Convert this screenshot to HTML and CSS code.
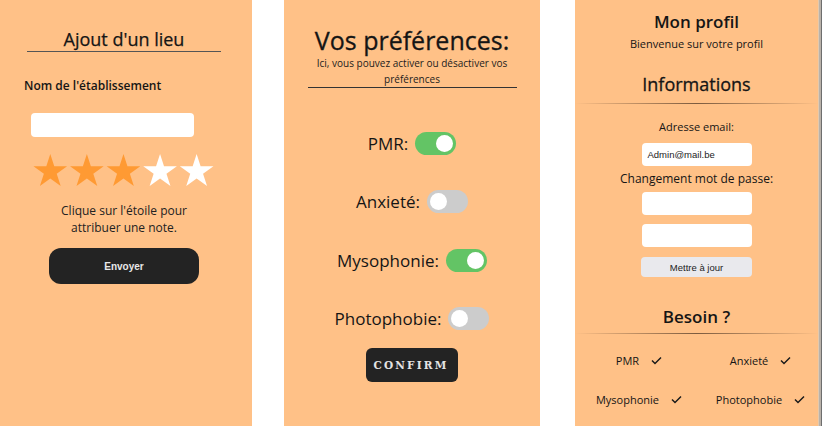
FILE: index.html
```html
<!DOCTYPE html>
<html lang="fr">
<head>
<meta charset="utf-8">
<title>Screens</title>
<link rel="stylesheet" href="styles.css">
</head>
<body>
<div class="screen">
  <section class="panel p1">
    <h1 class="p1-title">Ajout d'un lieu</h1>
    <div class="p1-label">Nom de l'établissement</div>
    <div class="field p1-input"></div>
    <svg class="stars" width="183" height="32" viewBox="0 0 196.7 34.4" aria-hidden="true">
      <defs>
        <polygon id="star" points="0,-19 4.27,-5.87 18.07,-5.87 6.9,2.24 11.17,15.37 0,7.26 -11.17,15.37 -6.9,2.24 -18.07,-5.87 -4.27,-5.87"/>
      </defs>
      <use href="#star" x="19.65" y="19" fill="#ff9a33"/>
      <use href="#star" x="58.98" y="19" fill="#ff9a33"/>
      <use href="#star" x="98.31" y="19" fill="#ff9a33"/>
      <use href="#star" x="137.64" y="19" fill="#ffffff"/>
      <use href="#star" x="176.97" y="19" fill="#ffffff"/>
    </svg>
    <p class="p1-hint">Clique sur l'étoile pour<br>attribuer une note.</p>
    <button class="send">Envoyer</button>
  </section>

  <section class="panel p2">
    <h1 class="p2-title">Vos préférences:</h1>
    <p class="p2-sub">Ici, vous pouvez activer ou désactiver vos<br>préférences</p>
    <div class="pref first"><span>PMR:</span><span class="toggle on"></span></div>
    <div class="pref"><span>Anxieté:</span><span class="toggle"></span></div>
    <div class="pref"><span>Mysophonie:</span><span class="toggle on"></span></div>
    <div class="pref"><span>Photophobie:</span><span class="toggle"></span></div>
    <button class="confirm">CONFIRM</button>
  </section>

  <section class="panel p3">
    <h1 class="p3-title">Mon profil</h1>
    <p class="p3-welcome">Bienvenue sur votre profil</p>
    <h2 class="p3-h2">Informations</h2>
    <div class="fade-line"></div>
    <div class="p3-label">Adresse email:</div>
    <div class="field p3-input email">Admin@mail.be</div>
    <div class="p3-label2">Changement mot de passe:</div>
    <div class="field p3-input pw1"></div>
    <div class="field p3-input pw2"></div>
    <button class="update">Mettre à jour</button>
    <h2 class="p3-h2 besoin">Besoin ?</h2>
    <div class="fade-line line2"></div>
    <div class="needs">
      <div class="need"><span>PMR</span><svg width="11" height="9" viewBox="0 0 11 9"><polyline points="1,4.5 4,7.5 10,1.5" fill="none" stroke="#1a1a1a" stroke-width="1.5"/></svg></div>
      <div class="need"><span>Anxieté</span><svg width="11" height="9" viewBox="0 0 11 9"><polyline points="1,4.5 4,7.5 10,1.5" fill="none" stroke="#1a1a1a" stroke-width="1.5"/></svg></div>
      <div class="need"><span>Mysophonie</span><svg width="11" height="9" viewBox="0 0 11 9"><polyline points="1,4.5 4,7.5 10,1.5" fill="none" stroke="#1a1a1a" stroke-width="1.5"/></svg></div>
      <div class="need"><span>Photophobie</span><svg width="11" height="9" viewBox="0 0 11 9"><polyline points="1,4.5 4,7.5 10,1.5" fill="none" stroke="#1a1a1a" stroke-width="1.5"/></svg></div>
    </div>
  </section>
  <div class="edge"></div>
</div>
</body>
</html>
```
FILE: styles.css
```css
* { box-sizing: border-box; }
html, body { margin: 0; padding: 0; background: #ffffff; }
body { font-family: "Open Sans", "DejaVu Sans", sans-serif; color: #151515; }

.screen { display: flex; height: 426px; overflow: hidden; }
.panel {
  background: #ffc187;
  height: 426px;
  display: flex;
  flex-direction: column;
  align-items: center;
}
.p1 { width: 252px; }
.p2 { width: 256px; margin-left: 32px; }
.p3 { width: 243px; margin-left: 35px; }
.edge {
  width: 4px;
  height: 426px;
  background: linear-gradient(to right, #e2c9ae 0, #e2c9ae 1px, #b9b2aa 1px, #b9b2aa 3px, #6e6e6e 3px);
}

.field { background: #ffffff; border-radius: 4px; }

/* Panel 1 */
.p1-title {
  align-self: flex-start;
  margin: 27px 0 0 27px;
  width: 194px;
  font-size: 18px;
  font-weight: 500;
  line-height: 24px;
  text-align: center;
  border-bottom: 1px solid #555;
  -webkit-text-stroke: 0.25px #151515;
}
.p1-label {
  align-self: flex-start;
  margin: 26px 0 0 24px;
  font-size: 12px;
  line-height: 16px;
  font-weight: 600;
}
.p1-input { align-self: flex-start; margin: 19px 0 0 31px; width: 163px; height: 24px; }
.stars { align-self: flex-start; margin: 17px 0 0 32px; display: block; }
.p1-hint {
  align-self: flex-start;
  width: 248px;
  margin: 17px 0 0;
  font-size: 12px;
  line-height: 16.5px;
  text-align: center;
  color: #222;
}
.send {
  align-self: flex-start;
  margin: 12px 0 0 49px;
  width: 150px;
  height: 36px;
  border: none;
  border-radius: 12px;
  background: #232323;
  color: #e8e8e8;
  font-family: "Liberation Sans", Arial, sans-serif;
  font-weight: bold;
  font-size: 10px;
}

/* Panel 2 */
.p2-title {
  margin: 25px 0 0;
  font-size: 25px;
  line-height: 30px;
  font-weight: 500;
  -webkit-text-stroke: 0.3px #151515;
}
.p2-sub {
  margin: 1px 0 0;
  width: 209px;
  font-size: 10px;
  line-height: 15.5px;
  text-align: center;
  border-bottom: 1px solid #333;
  color: #1c1c1c;
}
.pref {
  display: flex;
  align-items: center;
  gap: 7px;
  height: 24px;
  margin-top: 34.6px;
  font-size: 17px;
}
.pref.first { margin-top: 43px; }
.toggle {
  position: relative;
  width: 41px;
  height: 23px;
  border-radius: 12px;
  background: #cccccc;
}
.toggle::after {
  content: "";
  position: absolute;
  top: 3px;
  left: 3px;
  width: 17px;
  height: 17px;
  border-radius: 50%;
  background: #ffffff;
}
.toggle.on { background: #63c465; }
.toggle.on::after { left: 21px; }
.confirm {
  margin-top: 17px;
  width: 92px;
  height: 34px;
  border: none;
  border-radius: 6px;
  background: #232323;
  color: #e4e4e4;
  font-family: "DejaVu Serif", serif;
  font-weight: bold;
  font-size: 10.5px;
  letter-spacing: 2.2px;
  padding-left: 4px;
}

/* Panel 3 */
.p3-title {
  margin: 11px 0 0;
  font-size: 17px;
  line-height: 22px;
  font-weight: 600;
}
.p3-welcome { margin: 4px 0 0; font-size: 11px; line-height: 14px; }
.p3-h2 {
  margin: 21px 0 0;
  font-size: 18px;
  line-height: 24px;
  font-weight: 500;
  -webkit-text-stroke: 0.3px #151515;
}
.fade-line {
  width: 100%;
  height: 1px;
  margin-top: 7px;
  background: linear-gradient(to right, rgba(120, 90, 60, 0), rgba(110, 80, 55, 0.9) 50%, rgba(120, 90, 60, 0));
}
.p3-label { margin-top: 16px; font-size: 11px; line-height: 14px; }
.p3-input { width: 110px; height: 23px; }
.email {
  margin-top: 9px;
  font-family: "Liberation Sans", Arial, sans-serif;
  font-size: 9.5px;
  line-height: 23px;
  padding-left: 6px;
  color: #222;
}
.p3-label2 { margin-top: 5px; font-size: 12px; line-height: 16px; }
.pw1 { margin-top: 5px; }
.pw2 { margin-top: 9px; }
.update {
  margin-top: 10px;
  width: 111px;
  height: 20px;
  border: none;
  border-radius: 4px;
  background: #e9e9ed;
  font-family: "Liberation Sans", Arial, sans-serif;
  font-size: 9.5px;
  color: #222;
}
.p3-h2.besoin { margin-top: 29px; font-size: 17px; line-height: 22px; font-weight: 600; -webkit-text-stroke: 0; }
.fade-line.line2 { margin-top: 5px; }
.needs {
  width: 100%;
  margin-top: 18px;
  display: grid;
  grid-template-columns: 128px 1fr;
  row-gap: 23px;
  justify-items: center;
}
.need {
  display: flex;
  align-items: center;
  gap: 12px;
  height: 16px;
  font-size: 11px;
}
```
